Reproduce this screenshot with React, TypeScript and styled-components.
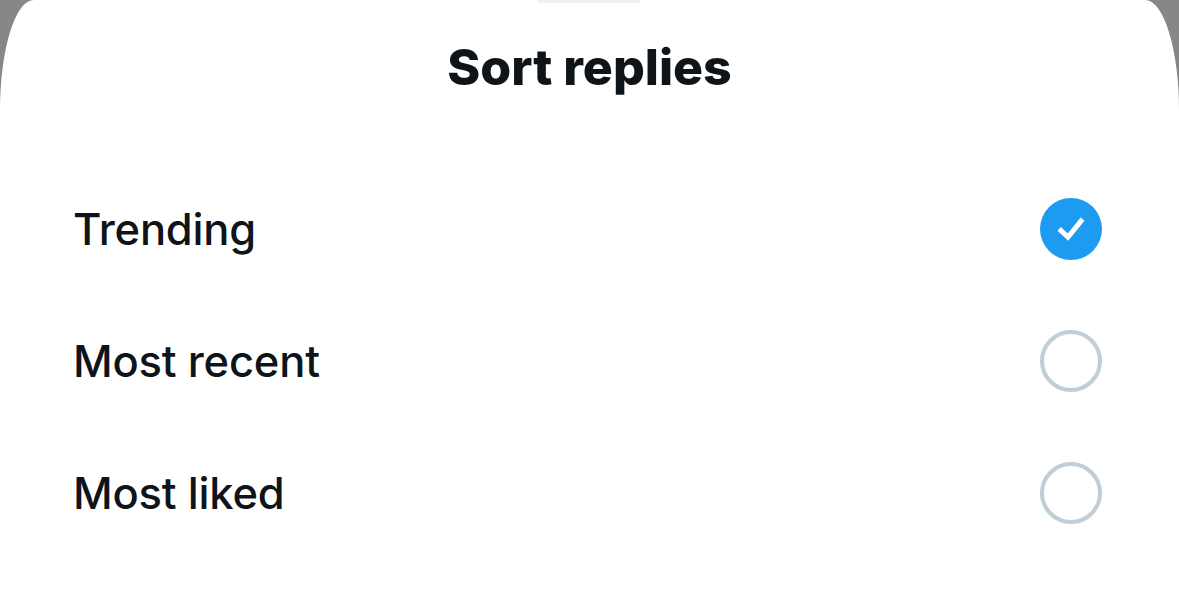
import React from "react";
import styled, { createGlobalStyle } from "styled-components";

const Global = createGlobalStyle`
  html, body { margin: 0; padding: 0; background: #878787; }
  body { width: 1179px; height: 592px; overflow: hidden; }
  #root { height: 100%; }
`;

const Sheet = styled.div`
  height: 592px;
  background: #ffffff;
  border-top-left-radius: 34px 110px;
  border-top-right-radius: 34px 110px;
  display: flex;
  flex-direction: column;
  align-items: center;
  font-family: Inter, "Noto Sans", sans-serif;
  color: #0f1419;
`;

const Handle = styled.div`
  width: 103px;
  height: 3px;
  background: #eff1f3;
  border-radius: 0 0 3px 3px;
`;

const Title = styled.h1`
  margin: 36px 0 0;
  font-size: 50px;
  line-height: 56px;
  font-weight: 800;
  letter-spacing: 0;
`;

const List = styled.div`
  margin-top: 68px;
  align-self: stretch;
  display: flex;
  flex-direction: column;
`;

const Row = styled.div`
  height: 132px;
  padding: 0 77px 0 73px;
  display: flex;
  align-items: center;
  justify-content: space-between;
`;

const Label = styled.span`
  font-size: 43.5px;
  font-weight: 500;
  letter-spacing: -0.2px;
`;

const Radio = styled.div<{ $checked?: boolean }>`
  width: 62px;
  height: 62px;
  box-sizing: border-box;
  border-radius: 50%;
  display: flex;
  align-items: center;
  justify-content: center;
  background: ${(p) => (p.$checked ? "#1d9bf0" : "transparent")};
  border: ${(p) => (p.$checked ? "none" : "4.5px solid #c0ced6")};
`;

const options = [
  { label: "Trending", checked: true },
  { label: "Most recent", checked: false },
  { label: "Most liked", checked: false },
];

export default function App() {
  return (
    <>
      <Global />
      <Sheet>
        <Handle />
        <Title>Sort replies</Title>
        <List>
          {options.map((o) => (
            <Row key={o.label}>
              <Label>{o.label}</Label>
              <Radio $checked={o.checked}>
                {o.checked && (
                  <svg width="30" height="30" viewBox="0 0 30 30">
                    <path
                      d="M5 16.5 L12 23 L25 7"
                      fill="none"
                      stroke="#fff"
                      strokeWidth="5"
                      strokeLinecap="square"
                      strokeLinejoin="miter"
                    />
                  </svg>
                )}
              </Radio>
            </Row>
          ))}
        </List>
      </Sheet>
    </>
  );
}
